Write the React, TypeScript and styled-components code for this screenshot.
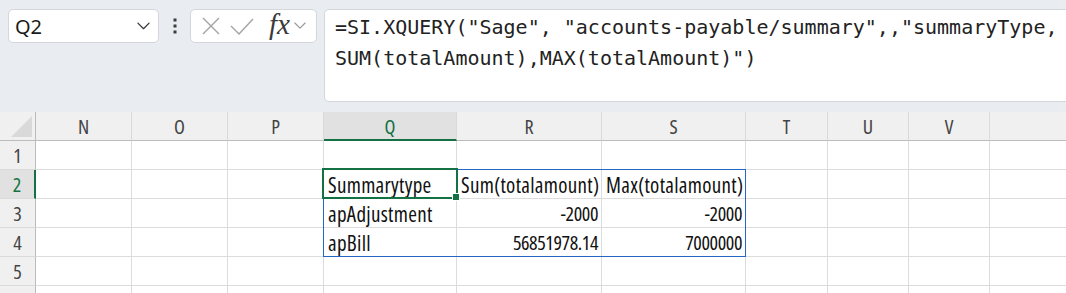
import React from "react";
import styled, { createGlobalStyle } from "styled-components";

const Global = createGlobalStyle`
  html, body { margin: 0; padding: 0; background: #ffffff; overflow: hidden; }
  body { width: 1066px; height: 293px; }
  * { box-sizing: border-box; }
`;

const GREEN = "#137144";
const BLUE = "#2565c4";
const CELL_FONT = `"Open Sans", "Noto Sans", sans-serif`;

const Page = styled.div`
  width: 1066px;
  height: 293px;
  overflow: hidden;
  display: flex;
  flex-direction: column;
`;

const Toolbar = styled.div`
  height: 112px;
  flex: none;
  background: #e9edf1;
  display: flex;
  align-items: flex-start;
  padding: 9px 0 0 8px;
`;

const NameBox = styled.div`
  width: 151px;
  height: 34px;
  background: #fff;
  border: 1px solid #d3d6da;
  border-radius: 5px;
  display: flex;
  align-items: center;
  justify-content: space-between;
  padding: 0 8px 0 6px;
  font-family: "Segoe UI", "Noto Sans", "Open Sans", sans-serif;
  font-size: 20px;
  color: #1b1b1b;
`;

const DotsSlot = styled.div`
  width: 31px;
  height: 34px;
  display: flex;
  align-items: center;
  justify-content: center;
`;

const FxBox = styled.div`
  width: 127px;
  height: 34px;
  background: #fff;
  border: 1px solid #d3d6da;
  border-radius: 5px;
  display: flex;
  align-items: center;
  padding: 0 0 0 9px;
`;

const IconSlot = styled.div<{ $w: number }>`
  width: ${(p) => p.$w}px;
  height: 32px;
  display: flex;
  align-items: center;
  justify-content: center;
  flex: none;
`;

const FxLabel = styled.span`
  font-family: "Liberation Serif", "DejaVu Serif", serif;
  font-style: italic;
  font-size: 29px;
  color: #3a3a3a;
  line-height: 1;
  margin: -4px 0 0 4px;
`;

const FormulaBar = styled.div`
  flex: 1;
  margin-left: 7px;
  margin-right: -12px;
  height: 93px;
  background: #fff;
  border: 1px solid #d3d6da;
  border-radius: 5px;
  padding: 2px 10px 0 10px;
  font-family: "DejaVu Sans Mono", "Liberation Mono", monospace;
  font-size: 20px;
  line-height: 31px;
  color: #222;
  white-space: pre;
`;

const GridWrap = styled.div`
  position: relative;
  flex: 1;
  background: #fff;
`;

const Grid = styled.div<{ $cols: string }>`
  display: grid;
  grid-template-columns: ${(p) => p.$cols};
  grid-auto-rows: 29px;
`;

const Corner = styled.div`
  background: #f0f0f0;
  border-right: 1px solid #bcbcbc;
  border-bottom: 1px solid #bcbcbc;
  display: flex;
  align-items: flex-end;
  justify-content: flex-end;
  padding: 0 3px 3px 0;
`;

const ColHead = styled.div<{ $sel?: boolean }>`
  background: ${(p) => (p.$sel ? "#e1e1e1" : "#f0f0f0")};
  border-right: 1px solid #dadada;
  border-bottom: ${(p) => (p.$sel ? `2px solid ${GREEN}` : "1px solid #bcbcbc")};
  color: ${(p) => (p.$sel ? GREEN : "#444")};
  font-family: ${CELL_FONT};
  font-stretch: condensed;
  font-size: 20px;
  display: flex;
  align-items: center;
  justify-content: center;
  padding-top: 1px;
`;

const RowHead = styled.div<{ $sel?: boolean }>`
  background: ${(p) => (p.$sel ? "#e1e1e1" : "#f0f0f0")};
  border-right: ${(p) => (p.$sel ? `2px solid ${GREEN}` : "1px solid #bcbcbc")};
  border-bottom: 1px solid #dadada;
  color: ${(p) => (p.$sel ? GREEN : "#444")};
  font-family: ${CELL_FONT};
  font-stretch: condensed;
  font-size: 20px;
  display: flex;
  align-items: center;
  justify-content: center;
  padding-top: 1px;
`;

const Cell = styled.div<{ $num?: boolean }>`
  border-right: 1px solid #dcdcdc;
  border-bottom: 1px solid #dcdcdc;
  font-family: ${CELL_FONT};
  font-stretch: condensed;
  font-size: ${(p) => (p.$num ? "20px" : "21px")};
  letter-spacing: ${(p) => (p.$num ? "-0.4px" : "0.3px")};
  color: #111;
  display: flex;
  align-items: center;
  justify-content: ${(p) => (p.$num ? "flex-end" : "flex-start")};
  padding: 1px 3px 0 4px;
  white-space: nowrap;
`;

const RangeBox = styled.div`
  position: absolute;
  left: 323px;
  top: 57px;
  width: 423px;
  height: 88px;
  border: 1px solid ${BLUE};
  pointer-events: none;
`;

const ActiveCell = styled.div`
  position: absolute;
  left: 322px;
  top: 56px;
  width: 136px;
  height: 31px;
  border: 2px solid ${GREEN};
  pointer-events: none;
`;

const FillHandle = styled.div`
  position: absolute;
  left: 452px;
  top: 81px;
  width: 8px;
  height: 8px;
  background: ${GREEN};
  border: 1px solid #fff;
`;

const colWidths = [36, 96, 96, 96, 133, 145, 144, 82, 81, 81, 120];
const colNames = ["N", "O", "P", "Q", "R", "S", "T", "U", "V", ""];

type CellData = { text: string; num?: boolean };
const data: Record<string, CellData> = {
  "2-Q": { text: "Summarytype" },
  "2-R": { text: "Sum(totalamount)" },
  "2-S": { text: "Max(totalamount)" },
  "3-Q": { text: "apAdjustment" },
  "3-R": { text: "-2000", num: true },
  "3-S": { text: "-2000", num: true },
  "4-Q": { text: "apBill" },
  "4-R": { text: "56851978.14", num: true },
  "4-S": { text: "7000000", num: true },
};

const Chevron = ({ color, size }: { color: string; size: number }) => (
  <svg width={size} height={size * 0.6} viewBox="0 0 14 8" fill="none">
    <path d="M1 1 L7 7 L13 1" stroke={color} strokeWidth="1.4" strokeLinecap="round" strokeLinejoin="round" />
  </svg>
);

export default function App() {
  const rows = [1, 2, 3, 4, 5, 6];
  return (
    <Page>
      <Global />
      <Toolbar>
        <NameBox>
          <span>Q2</span>
          <Chevron color="#3a3a3a" size={13} />
        </NameBox>
        <DotsSlot>
          <svg width="4" height="16" viewBox="0 0 4 16">
            <rect x="0.5" y="0.5" width="3" height="3" fill="#3c3c3c" />
            <rect x="0.5" y="6.5" width="3" height="3" fill="#3c3c3c" />
            <rect x="0.5" y="12.5" width="3" height="3" fill="#3c3c3c" />
          </svg>
        </DotsSlot>
        <FxBox>
          <IconSlot $w={22}>
            <svg width="18" height="18" viewBox="0 0 18 18" fill="none">
              <path d="M1 1 L17 17 M17 1 L1 17" stroke="#a3a3a3" strokeWidth="1.4" />
            </svg>
          </IconSlot>
          <IconSlot $w={40}>
            <svg width="24" height="17" viewBox="0 0 24 17" fill="none">
              <path d="M1 8 L9 16 L23 1" stroke="#a3a3a3" strokeWidth="1.4" />
            </svg>
          </IconSlot>
          <IconSlot $w={31}>
            <FxLabel>fx</FxLabel>
          </IconSlot>
          <IconSlot $w={14}>
            <Chevron color="#9a9a9a" size={12} />
          </IconSlot>
        </FxBox>
        <FormulaBar>
          {'=SI.XQUERY("Sage", "accounts-payable/summary",,"summaryType,\nSUM(totalAmount),MAX(totalAmount)")'}
        </FormulaBar>
      </Toolbar>
      <GridWrap>
        <Grid $cols={colWidths.map((w) => `${w}px`).join(" ")}>
          <Corner>
            <svg width="21" height="21" viewBox="0 0 21 21">
              <polygon points="21,0 21,21 0,21" fill="#d9d9d9" />
            </svg>
          </Corner>
          {colNames.map((c, i) => (
            <ColHead key={"h" + i} $sel={c === "Q"}>
              {c}
            </ColHead>
          ))}
          {rows.map((r) => (
            <React.Fragment key={r}>
              <RowHead $sel={r === 2}>{r < 6 ? r : ""}</RowHead>
              {colNames.map((c, i) => {
                const d = data[`${r}-${c}`];
                return (
                  <Cell key={i} $num={d?.num}>
                    {d?.text}
                  </Cell>
                );
              })}
            </React.Fragment>
          ))}
        </Grid>
        <RangeBox />
        <ActiveCell />
        <FillHandle />
      </GridWrap>
    </Page>
  );
}
